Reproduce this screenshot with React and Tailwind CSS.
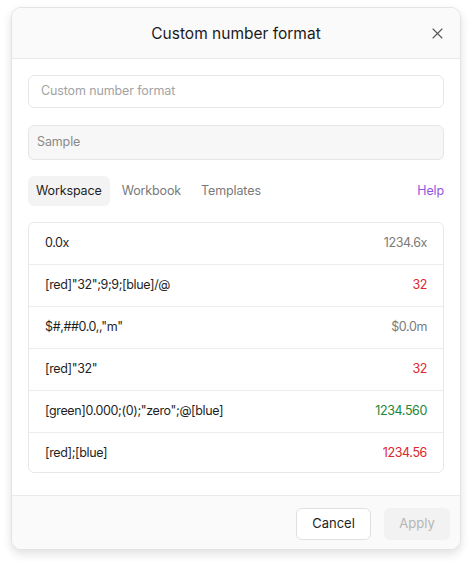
import React from "react";

const rows = [
    {fmt: "0.0x", val: "1234.6x", color: "text-[#7a7a7a]"},
    {fmt: "[red]\"32\";9;9;[blue]/@", val: "32", color: "text-[#e0242e]"},
    {fmt: "$#,##0.0,,\"m\"", val: "$0.0m", color: "text-[#7a7a7a]"},
    {fmt: "[red]\"32\"", val: "32", color: "text-[#e0242e]"},
    {fmt: "[green]0.000;(0);\"zero\";@[blue]", val: "1234.560", color: "text-[#238636]"},
    {fmt: "[red];[blue]", val: "1234.56", color: "text-[#e0242e]"},
];

const CloseIcon = () => (
    <svg width="11" height="11" viewBox="0 0 11 11" fill="none">
        <path d="M1 1L10 10M10 1L1 10" stroke="#555" strokeWidth="1.1" strokeLinecap="round"/>
    </svg>
);

export default function App() {
    return (
        <div className="min-h-screen bg-white pt-[7px] pl-[11px] font-['Inter',sans-serif]">
            <div className="w-[450px] h-[543px] rounded-[10px] border border-[#e3e3e3] bg-white shadow-[0_4px_10px_rgba(0,0,0,0.12)] flex flex-col overflow-hidden">
                {/* header */}
                <div className="relative h-[51px] shrink-0 bg-[#fafafa] border-b border-[#ebebeb] flex items-center justify-center">
                    <div className="text-[15.5px] text-[#1a1a1a] pt-[1px]">Custom number format</div>
                    <div className="absolute right-[17px] top-[20px]">
                        <CloseIcon/>
                    </div>
                </div>

                {/* body */}
                <div className="flex-1 flex flex-col px-[16px] pt-[16px] pb-[22px] min-h-0">
                    <div className="h-[33px] rounded-[6px] border border-[#e6e6e6] bg-white flex items-center px-[12px]">
                        <span className="text-[12.5px] tracking-[-0.01em] text-[#a3a3a3]">Custom number format</span>
                    </div>
                    <div className="mt-[17px] h-[35px] rounded-[6px] border border-[#e6e6e6] bg-[#f7f7f7] flex items-center px-[8px]">
                        <span className="text-[12.5px] tracking-[-0.01em] text-[#8a8a8a]">Sample</span>
                    </div>

                    <div className="mt-[16px] h-[30px] flex items-center text-[12.5px] tracking-[-0.01em]">
                        <div className="h-[30px] px-[8px] rounded-[6px] bg-[#f3f3f3] flex items-center text-[#1f1f1f]">Workspace</div>
                        <div className="ml-[4px] px-[8px] text-[#7a7a7a]">Workbook</div>
                        <div className="ml-[4px] px-[8px] text-[#7a7a7a]">Templates</div>
                        <div className="ml-auto text-[#9155e0]">Help</div>
                    </div>

                    <div className="mt-[16px] flex-1 min-h-0 rounded-[6px] border border-[#e8e8e8] overflow-hidden">
                        {rows.map((r, i) => (
                            <div key={i}
                                 className="h-[42px] flex items-center justify-between px-[16px] border-b border-[#ececec] text-[12.5px] tracking-[-0.03em]">
                                <span className="text-[#1f1f1f]">{r.fmt}</span>
                                <span className={r.color}>{r.val}</span>
                            </div>
                        ))}
                    </div>
                </div>

                {/* footer */}
                <div className="h-[54px] shrink-0 bg-[#fafafa] border-t border-[#ebebeb] flex items-start justify-end pt-[12px] pr-[10px] gap-[13px]">
                    <div className="h-[32px] w-[75px] rounded-[6px] border border-[#e0e0e0] bg-white flex items-center justify-center text-[13px] text-[#1f1f1f]">Cancel</div>
                    <div className="h-[32px] w-[66px] rounded-[6px] bg-[#f2f2f2] flex items-center justify-center text-[13px] text-[#b5b5b5]">Apply</div>
                </div>
            </div>
        </div>
    );
}
